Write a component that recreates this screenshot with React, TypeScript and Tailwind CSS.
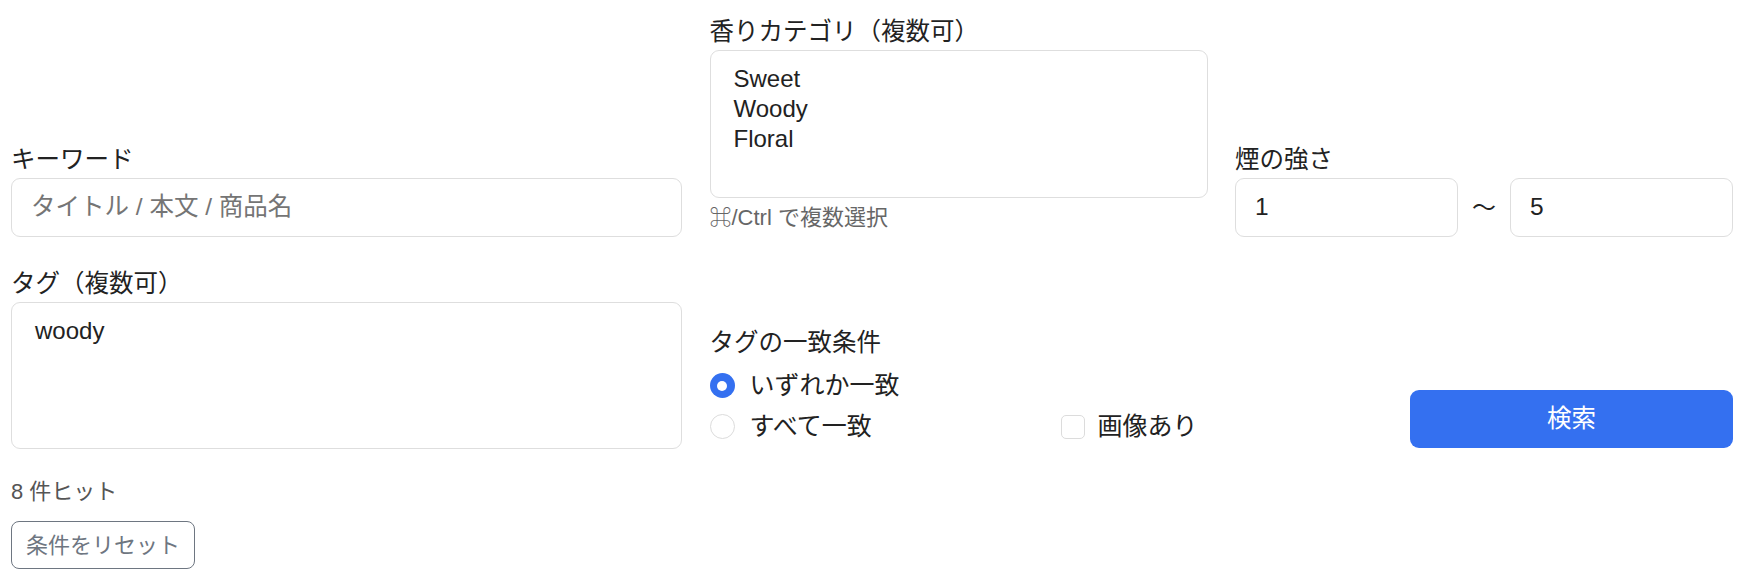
import React from 'react';

const font = { fontFamily: '"Liberation Sans", "Noto Sans CJK JP", sans-serif' };

function Label({ children }: { children: React.ReactNode }) {
  return <div className="text-[24.5px] leading-[36px] text-[#222]">{children}</div>;
}

function ListBox({ items }: { items: string[] }) {
  return (
    <div className="h-[148px] rounded-[9px] border border-[#dedede] bg-white pl-[23px] pt-[13px]">
      {items.map((it) => (
        <div key={it} className="text-[24px] leading-[30px] text-[#222]">
          {it}
        </div>
      ))}
    </div>
  );
}

function TextBox({ value, placeholder }: { value?: string; placeholder?: string }) {
  return (
    <div className="flex h-[59px] items-center rounded-[9px] border border-[#dedede] bg-white px-[19px] text-[24.5px]">
      {value ? (
        <span className="text-[#222]">{value}</span>
      ) : (
        <span className="text-[#757575]">{placeholder}</span>
      )}
    </div>
  );
}

export default function App() {
  return (
    <div className="min-h-[585px] bg-white pl-[11px] pr-[9px] pt-[14px]" style={font}>
      <div className="grid grid-cols-[671px_498px_498px] items-end gap-x-[27.5px] gap-y-[29px]">
        {/* row 1 */}
        <div>
          <Label>キーワード</Label>
          <TextBox placeholder="タイトル / 本文 / 商品名" />
        </div>
        <div>
          <Label>香りカテゴリ（複数可）</Label>
          <ListBox items={['Sweet', 'Woody', 'Floral']} />
          <div className="mt-[4px] pb-[4px] text-[22px] leading-[31px] text-[#666]">⌘/Ctrl で複数選択</div>
        </div>
        <div>
          <Label>煙の強さ</Label>
          <div className="flex items-center gap-[14px]">
            <div className="flex-1">
              <TextBox value="1" />
            </div>
            <span className="text-[24px] text-[#222]">〜</span>
            <div className="flex-1">
              <TextBox value="5" />
            </div>
          </div>
        </div>

        {/* row 2 */}
        <div>
          <Label>タグ（複数可）</Label>
          <div className="h-[147px] rounded-[9px] border border-[#dedede] bg-white pl-[23px] pt-[13px]">
            <div className="text-[24px] leading-[30px] text-[#222]">woody</div>
          </div>
        </div>
        <div className="grid grid-cols-[351px_1fr] items-end pb-[2px]">
          <div>
            <Label>タグの一致条件</Label>
            <div className="mt-[4px]">
              <div className="flex h-[41px] items-center gap-[15px]">
                <span className="flex h-[25px] w-[25px] items-center justify-center rounded-full bg-[#3470f0]">
                  <span className="h-[10px] w-[10px] rounded-full bg-white" />
                </span>
                <span className="text-[25px] text-[#222]">いずれか一致</span>
              </div>
              <div className="flex h-[41px] items-center gap-[15px]">
                <span className="h-[25px] w-[25px] rounded-full border border-[#dcdcdc] bg-white" />
                <span className="text-[25px] text-[#222]">すべて一致</span>
              </div>
            </div>
          </div>
          <div className="flex h-[41px] items-center gap-[13px]">
            <span className="h-[24px] w-[24px] rounded-[5px] border border-[#dcdcdc] bg-white" />
            <span className="text-[25px] text-[#222]">画像あり</span>
          </div>
        </div>
        <div className="flex justify-end pb-[1px]">
          <button
            type="button"
            className="flex h-[58px] w-[323px] items-center justify-center rounded-[9px] bg-[#3470f0] text-[24.5px] text-white"
          >
            検索
          </button>
        </div>
      </div>

      {/* result row */}
      <div className="mt-[27px] text-[22px] leading-[31px] text-[#555]">8 件ヒット</div>
      <button
        type="button"
        className="mt-[14px] flex h-[48px] items-center rounded-[8px] border border-[#6e7681] bg-white px-[14px] text-[22px] text-[#6e7681]"
      >
        条件をリセット
      </button>
    </div>
  );
}
